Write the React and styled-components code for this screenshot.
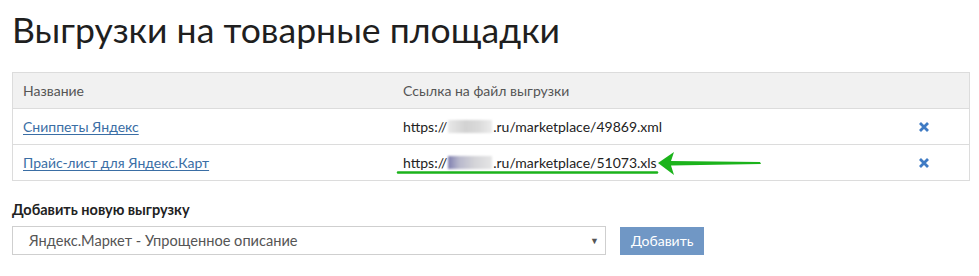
import React from 'react';
import styled, { createGlobalStyle } from 'styled-components';

const GlobalStyle = createGlobalStyle`
  body {
    margin: 0;
    background: #fff;
    font-family: Lato, "Open Sans", Arial, sans-serif;
    color: #222;
  }
`;

const Page = styled.div`
  position: relative;
  padding: 0 12px;
  width: 979px;
  box-sizing: border-box;
`;

const Title = styled.h1`
  margin: 0;
  padding-top: 8px;
  font-size: 35.6px;
  line-height: 44px;
  font-weight: 400;
  color: #1f1f1f;
`;

const Table = styled.div`
  margin-top: 20px;
  width: 956px;
  border: 1px solid #dcdcdc;
  display: grid;
  grid-template-columns: 380px 1fr 80px;
`;

const Cell = styled.div`
  height: 35px;
  display: flex;
  align-items: center;
  padding: 0 10px;
  font-size: 14px;
  border-top: ${(p) => (p.first ? 'none' : '1px solid #dcdcdc')};
  background: ${(p) => (p.head ? '#f1f1f1' : '#fff')};
  color: ${(p) => (p.head ? '#555' : '#222')};
  justify-content: ${(p) => (p.center ? 'center' : 'flex-start')};
`;

const Link = styled.a`
  color: #3a6ea5;
  text-decoration: underline;
  text-underline-offset: 2px;
  cursor: pointer;
`;

const Blur = styled.span`
  display: inline-block;
  width: ${(p) => p.w}px;
  height: 13px;
  margin: 0 1px;
  vertical-align: -1px;
  background: ${(p) =>
    p.tint
      ? 'linear-gradient(90deg, #7f7fb0 0%, #b8b8cc 25%, #d4d4d8 60%, #e6e6e6 100%)'
      : 'linear-gradient(90deg, #e8e8e8, #d2d2d2 40%, #dadada 70%, #ececec)'};
  filter: blur(1px);
`;

const Remove = styled.button`
  border: none;
  background: none;
  padding: 0;
  margin-left: -10px;
  cursor: pointer;
  display: flex;
`;

const AddSection = styled.div`
  margin-top: 20px;
`;

const Label = styled.div`
  font-size: 14.5px;
  font-weight: 700;
  color: #222;
  margin-bottom: 8px;
`;

const AddRow = styled.div`
  display: flex;
  align-items: center;
  gap: 14px;
`;

const Select = styled.div`
  width: 594px;
  height: 29px;
  box-sizing: border-box;
  border: 1px solid #cfcfcf;
  display: flex;
  align-items: center;
  justify-content: space-between;
  padding: 0 6px 0 16px;
  font-size: 14.6px;
  color: #555;
`;

const Caret = styled.span`
  font-size: 9px;
  color: #555;
`;

const AddButton = styled.button`
  height: 28px;
  padding: 0 11px;
  border: none;
  background: #7097c5;
  color: #fff;
  font-family: Lato, Arial, sans-serif;
  font-size: 14px;
  cursor: pointer;
`;

const Arrow = styled.svg`
  position: absolute;
  left: 390px;
  top: 148px;
  pointer-events: none;
`;

const CrossIcon = () => (
  <svg width="12" height="12" viewBox="0 0 12 12">
    <path d="M2 2 L10 10 M10 2 L2 10" stroke="#3f7bc4" strokeWidth="2.8" strokeLinecap="butt" />
  </svg>
);

const rows = [
  { name: 'Сниппеты Яндекс', file: '49869.xml', tint: false },
  { name: 'Прайс-лист для Яндекс.Карт', file: '51073.xls', tint: true },
];

export default function App() {
  return (
    <>
      <GlobalStyle />
      <Page>
        <Title>Выгрузки на товарные площадки</Title>
        <Table>
          <Cell head first>Название</Cell>
          <Cell head first>Ссылка на файл выгрузки</Cell>
          <Cell head first />
          {rows.map((r) => (
            <React.Fragment key={r.file}>
              <Cell><Link>{r.name}</Link></Cell>
              <Cell>
                https://<Blur w={44} tint={r.tint} />.ru/marketplace/{r.file}
              </Cell>
              <Cell center>
                <Remove><CrossIcon /></Remove>
              </Cell>
            </React.Fragment>
          ))}
        </Table>
        <AddSection>
          <Label>Добавить новую выгрузку</Label>
          <AddRow>
            <Select>
              Яндекс.Маркет - Упрощенное описание
              <Caret>▼</Caret>
            </Select>
            <AddButton>Добавить</AddButton>
          </AddRow>
        </AddSection>
        <Arrow width="380" height="32" viewBox="0 0 380 32">
          <path d="M8 24.5 L267 24.5" stroke="#1bb31b" strokeWidth="2.5" strokeLinecap="round" />
          <path d="M268 15 L284 4 L281 13 L370 14 L371 16 L281 17.5 L284 27 Z" fill="#1bb31b" />
        </Arrow>
      </Page>
    </>
  );
}
